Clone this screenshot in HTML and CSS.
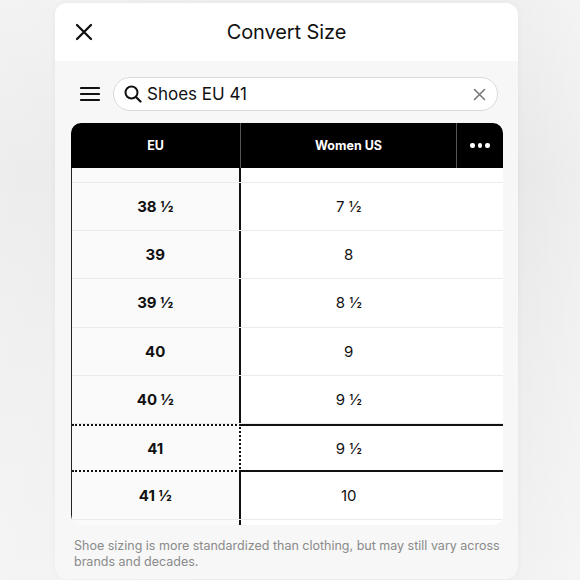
FILE: index.html
```html
<!DOCTYPE html>
<html>
<head>
<meta charset="utf-8">
<link rel="stylesheet" href="styles.css">
</head>
<body>
<div class="backdrop">
  <div class="modal">
    <header class="modal-head">
      <svg class="close-icon" width="18" height="18" viewBox="0 0 18 18"><path d="M2 2 L16 16 M16 2 L2 16" stroke="#111" stroke-width="2.3" stroke-linecap="round" fill="none"/></svg>
      <h1 class="title">Convert Size</h1>
    </header>
    <section class="content">
      <div class="search-row">
        <svg class="menu-icon" width="20" height="16" viewBox="0 0 20 16"><path d="M1 2 H19 M1 8 H19 M1 14 H19" stroke="#111" stroke-width="2.2" stroke-linecap="round"/></svg>
        <div class="search">
          <svg class="search-icon" width="18" height="18" viewBox="0 0 18 18"><circle cx="7.5" cy="7.5" r="6" stroke="#111" stroke-width="2" fill="none"/><path d="M12 12 L16.5 16.5" stroke="#111" stroke-width="2.2" stroke-linecap="round"/></svg>
          <span class="search-text">Shoes EU 41</span>
          <svg class="clear-icon" width="13" height="13" viewBox="0 0 13 13"><path d="M1.5 1.5 L11.5 11.5 M11.5 1.5 L1.5 11.5" stroke="#777" stroke-width="1.6" stroke-linecap="round"/></svg>
        </div>
      </div>
      <div class="table">
        <div class="thead">
          <div class="th th-eu">EU</div>
          <div class="th th-us">Women US</div>
          <div class="th th-more"><span class="dot"></span><span class="dot"></span><span class="dot"></span></div>
        </div>
        <div class="tbody">
          <div class="rows">
            <div class="row partial-top"><div class="td eu"></div><div class="td us"></div></div>
            <div class="row"><div class="td eu">38 ½</div><div class="td us">7 ½</div></div>
            <div class="row"><div class="td eu">39</div><div class="td us">8</div></div>
            <div class="row"><div class="td eu">39 ½</div><div class="td us">8 ½</div></div>
            <div class="row"><div class="td eu">40</div><div class="td us">9</div></div>
            <div class="row"><div class="td eu">40 ½</div><div class="td us">9 ½</div></div>
            <div class="row active"><div class="td eu">41</div><div class="td us">9 ½</div></div>
            <div class="row"><div class="td eu">41 ½</div><div class="td us">10</div></div>
            <div class="row partial-bottom"><div class="td eu"></div><div class="td us"></div></div>
          </div>
        </div>
      </div>
      <p class="note">Shoe sizing is more standardized than clothing, but may still vary across brands and decades.</p>
    </section>
  </div>
</div>
</body>
</html>
```

FILE: styles.css
```css
* { box-sizing: border-box; }
html, body { margin: 0; padding: 0; }
body {
  width: 580px;
  height: 580px;
  overflow: hidden;
  font-family: Inter, "Noto Sans", "Liberation Sans", sans-serif;
  background: linear-gradient(180deg, #efefef 0%, #e7e7e7 30%, #ececec 60%, #f1f1f1 100%);
}
.backdrop {
  width: 580px;
  height: 580px;
  padding-top: 3px;
  padding-left: 55px;
  background: linear-gradient(90deg, rgba(255,255,255,0.25) 0%, rgba(255,255,255,0) 40%, rgba(255,255,255,0) 88%, rgba(255,255,255,0.3) 100%);
}
.modal {
  width: 463px;
  height: 576px;
  border-radius: 12px;
  overflow: hidden;
  background: #f7f7f7;
  box-shadow: 0 0 6px rgba(0,0,0,0.04);
}
.modal-head {
  height: 58px;
  background: #fff;
  display: flex;
  align-items: center;
  justify-content: center;
  position: relative;
}
.close-icon {
  position: absolute;
  left: 20px;
  top: 20px;
}
.title {
  margin: 0;
  font-size: 20px;
  font-weight: 400;
  color: #111;
  letter-spacing: -0.1px;
}
.content {
  padding: 16px 15px 0 16px;
}
.search-row {
  display: flex;
  align-items: center;
  height: 34px;
}
.menu-icon {
  margin-left: 9px;
  margin-right: 13px;
}
.search {
  flex: 1;
  height: 34px;
  margin-right: 5px;
  border: 1px solid #d9d9d9;
  border-radius: 17px;
  background: #fff;
  display: flex;
  align-items: center;
  padding: 0 11px 0 10px;
}
.search-icon { margin-right: 5px; }
.search-text {
  flex: 1;
  font-size: 17px;
  color: #111;
}
.table {
  margin-top: 12px;
  width: 432px;
  border-radius: 10px;
  overflow: hidden;
  background: #fff;
}
.thead {
  display: flex;
  height: 45px;
  background: #000;
  color: #fff;
}
.th {
  display: flex;
  align-items: center;
  justify-content: center;
  font-size: 12.5px;
  font-weight: 700;
}
.th-eu { width: 170px; border-right: 1px solid #555; }
.th-us { width: 216px; border-right: 1px solid #555; }
.th-more { flex: 1; gap: 3px; }
.dot {
  width: 4.5px;
  height: 4.5px;
  border-radius: 50%;
  background: #fff;
}
.tbody {
  height: 357px;
  overflow: hidden;
  border-left: 1.5px solid #222;
}
.rows { display: flex; flex-direction: column; }
.row {
  display: flex;
  flex-shrink: 0;
  height: 48.4px;
  border-bottom: 1px solid #ebebeb;
}
.row.partial-top { height: 14.5px; }
.row.partial-bottom { height: 10px; border-bottom: none; }
.td {
  display: flex;
  align-items: center;
  justify-content: center;
  font-size: 15px;
  color: #111;
}
.eu {
  width: 168.5px;
  background: #fafafa;
  font-weight: 700;
  border-right: 2px solid #111;
}
.us { flex: 1; background: #fff; padding-right: 46px; }
.row.active { border-bottom: none; height: 47.4px; }
.row.active .eu {
  border-top: 2px dotted #111;
  border-bottom: 2px dotted #111;
  border-right: 2px dotted #111;
}
.row.active .us {
  border-top: 2px solid #111;
  border-bottom: 2px solid #111;
}
.note {
  margin: 13px 0 0 3px;
  font-size: 12.5px;
  line-height: 16px;
  color: #8a8a8a;
}
```
